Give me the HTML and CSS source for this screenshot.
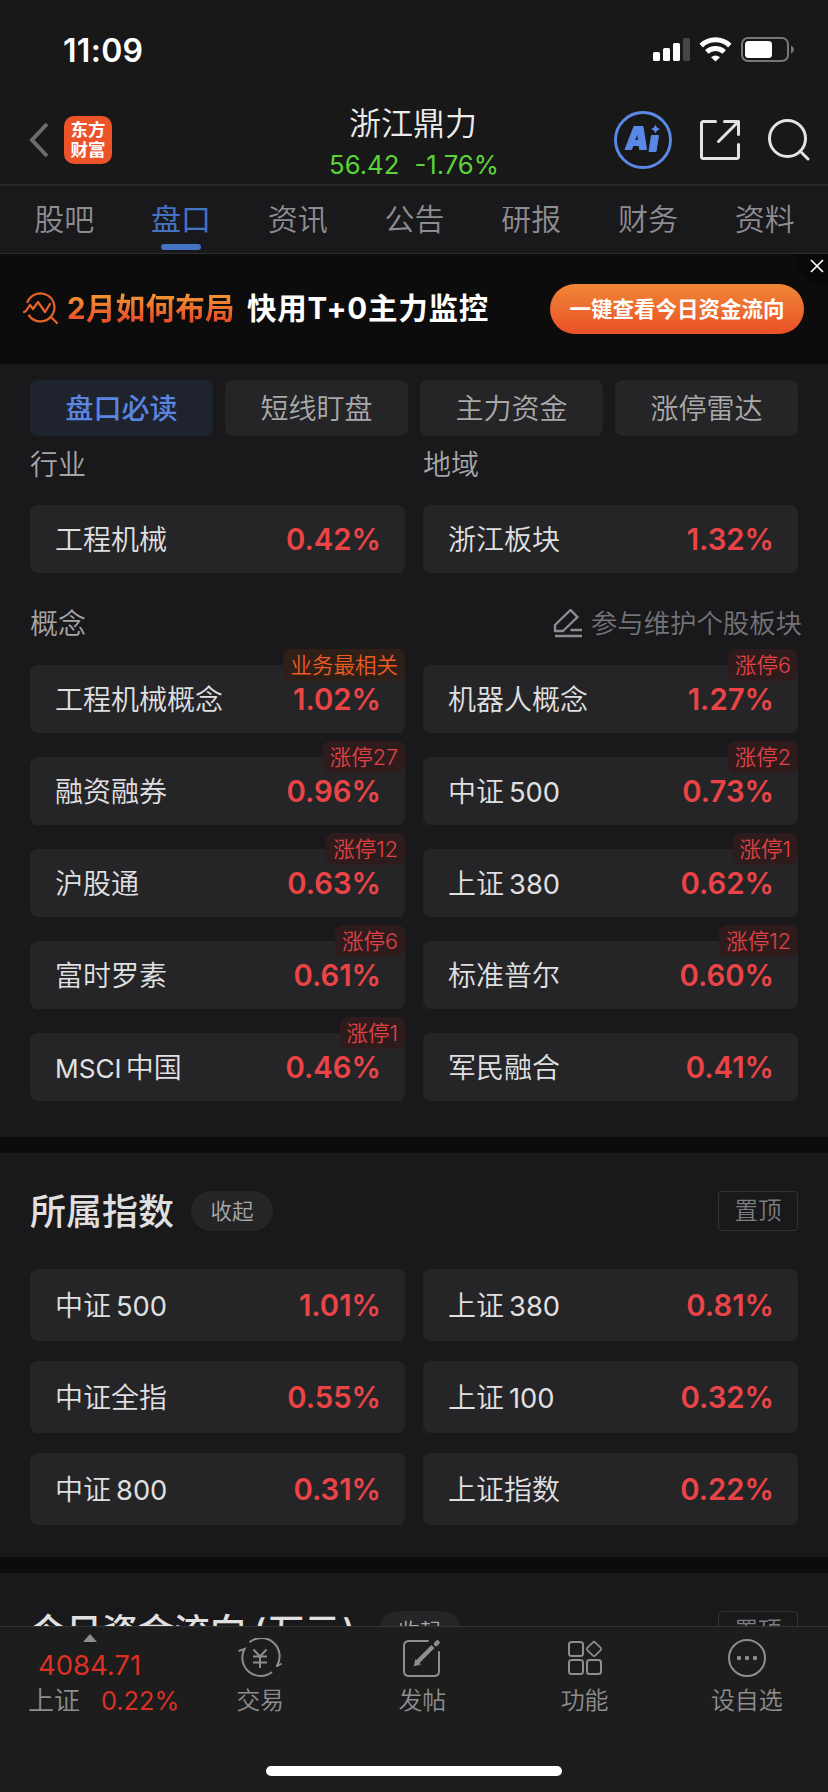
FILE: index.html
```html
<!DOCTYPE html>
<html lang="zh-CN">
<head>
<meta charset="utf-8">
<title>浙江鼎力 盘口</title>
<link rel="stylesheet" href="styles.css">
</head>
<body>
<div class="phone">
  <div class="status">
    <span class="clock">11:09</span>
    <svg class="status-icons" width="142" height="26" viewBox="0 0 142 26">
      <g fill="#fff"><rect x="0" y="15" width="7" height="9" rx="1.5"/><rect x="10" y="11" width="7" height="13" rx="1.5"/><rect x="20" y="6" width="7" height="18" rx="1.5"/></g>
      <rect x="30" y="1" width="7" height="23" rx="1.5" fill="#464646"/>
      <g fill="none" stroke="#fff" stroke-width="5"><path d="M48.2 8.6a20.5 20.5 0 0 1 28.6 0"/><path d="M53.8 15a12.6 12.6 0 0 1 17.4 0"/></g>
      <path d="M58 20.2q4.500-3.600 9 0L62.500 24.500z" fill="#fff"/>
      <rect x="89" y="1" width="46" height="23" rx="6" fill="none" stroke="#777" stroke-width="2"/>
      <rect x="92" y="4" width="27" height="17" rx="3.500" fill="#fff"/>
      <path d="M138 8.500q3 1.500 3 4t-3 4z" fill="#777"/>
    </svg>
  </div>

  <header class="header">
    <div class="head-left">
      <svg width="20" height="36" viewBox="0 0 20 36"><path d="M18 2 3 18l15 16" fill="none" stroke="#6c6c6c" stroke-width="4"/></svg>
      <div class="logo"><span>东方</span><span>财富</span></div>
    </div>
    <div class="quote">
      <div class="stock">浙江鼎力</div>
      <div class="price"><span>56.42</span><span>-1.76%</span></div>
    </div>
    <div class="head-right">
      <svg width="58" height="58" viewBox="0 0 58 58"><circle cx="29" cy="29" r="27.500" fill="none" stroke="#5a88e6" stroke-width="3"/>
        <path fill="#5a88e6" fill-rule="evenodd" stroke="#5a88e6" stroke-width="1" stroke-linejoin="round" d="M20 15.500h9l3.500 23h-7l-.5-4h-6l-1.500 4h-6.500zM23.500 22l-3 7.500h4zM37.500 24.500h7l-2.500 16h-7z"/>
        <path fill="#5a88e6" d="M41.500 13.500q1 3.500 4.500 4.500-3.500 1-4.500 4.500-1-3.500-4.500-4.500 3.500-1 4.500-4.500z"/></svg>
      <svg width="42" height="42" viewBox="0 0 42 42"><path d="M16.500 2.500H4.500q-2 0-2 2v33q0 2 2 2h33q2 0 2-2V25.500M25.500 2.500h14v13M39 3 19.500 22.500" fill="none" stroke="#e2e2e2" stroke-width="3" stroke-linecap="round" stroke-linejoin="round"/></svg>
      <svg width="42" height="42" viewBox="0 0 42 42"><circle cx="19.500" cy="19.500" r="18" fill="none" stroke="#e2e2e2" stroke-width="3"/><path d="m32 32 8 8" stroke="#e2e2e2" stroke-width="3" stroke-linecap="round"/></svg>
    </div>
  </header>

  <nav class="tabs">
    <span>股吧</span><span class="on">盘口</span><span>资讯</span><span>公告</span><span>研报</span><span>财务</span><span>资料</span>
  </nav>

  <div class="banner">
    <svg class="promo-icon" width="36" height="36" viewBox="0 0 36 36" fill="none" stroke="#e8622b" stroke-width="2.200" stroke-linecap="round" stroke-linejoin="round"><path d="M4.500 12A14 14 0 1 1 6 25.500M28 27l6 6"/><path d="m1 22 2-1 4-6 3 4 5-7 7 10 5-8"/></svg>
    <b class="promo-a">2月如何布局</b>
    <b class="promo-b">快用T+0主力监控</b>
    <span class="cta">一键查看今日资金流向</span>
    <div class="close"><svg width="14" height="14" viewBox="0 0 14 14"><path d="m1 1 12 12M13 1 1 13" stroke="#fff" stroke-width="1.700"/></svg></div>
  </div>

  <main class="content">
    <div class="pills"><span class="on">盘口必读</span><span>短线盯盘</span><span>主力资金</span><span>涨停雷达</span></div>

    <section class="boards">
      <div class="pair labels"><span>行业</span><span>地域</span></div>
      <div class="pair">
        <div class="card"><span>工程机械</span><b>0.42%</b></div>
        <div class="card"><span>浙江板块</span><b>1.32%</b></div>
      </div>
      <div class="concept">
        <span>概念</span>
        <span class="maintain"><svg width="30" height="30" viewBox="0 0 30 30" fill="none" stroke="#8e8e92" stroke-width="2.400" stroke-linejoin="round"><path d="M2 23v-6L17.500 2l7 7L10 23zM17.500 22H29M2 28h27"/></svg>参与维护个股板块</span>
      </div>
      <div class="pair">
        <div class="card"><span>工程机械概念</span><b>1.02%</b><i class="best">业务最相关</i></div>
        <div class="card"><span>机器人概念</span><b>1.27%</b><i>涨停6</i></div>
        <div class="card"><span>融资融券</span><b>0.96%</b><i>涨停27</i></div>
        <div class="card"><span>中证<em>500</em></span><b>0.73%</b><i>涨停2</i></div>
        <div class="card"><span>沪股通</span><b>0.63%</b><i>涨停12</i></div>
        <div class="card"><span>上证<em>380</em></span><b>0.62%</b><i>涨停1</i></div>
        <div class="card"><span>富时罗素</span><b>0.61%</b><i>涨停6</i></div>
        <div class="card"><span>标准普尔</span><b>0.60%</b><i>涨停12</i></div>
        <div class="card"><span><em class="lead">MSCI</em>中国</span><b>0.46%</b><i>涨停1</i></div>
        <div class="card"><span>军民融合</span><b>0.41%</b></div>
      </div>
    </section>

    <section class="block">
      <div class="block-head"><h2>所属指数</h2><span class="fold">收起</span><span class="pin">置顶</span></div>
      <div class="pair tall">
        <div class="card"><span>中证<em>500</em></span><b>1.01%</b></div>
        <div class="card"><span>上证<em>380</em></span><b>0.81%</b></div>
        <div class="card"><span>中证全指</span><b>0.55%</b></div>
        <div class="card"><span>上证<em>100</em></span><b>0.32%</b></div>
        <div class="card"><span>中证<em>800</em></span><b>0.31%</b></div>
        <div class="card"><span>上证指数</span><b>0.22%</b></div>
      </div>
    </section>

    <section class="block">
      <div class="block-head"><h2>今日资金流向<em class="open">(</em>万元<em class="shut">)</em></h2><span class="fold">收起</span><span class="pin">置顶</span></div>
    </section>
  </main>

  <footer class="bottom">
    <div class="bar">
      <div class="index">
        <svg width="14" height="8" viewBox="0 0 14 8"><path d="M7 0l7 8H0z" fill="#8d8d92"/></svg>
        <div class="point">4084.71</div>
        <div class="sub"><span>上证</span><span class="rate">0.22%</span></div>
      </div>
      <div class="act">
        <svg width="46" height="40" viewBox="0 0 46 40" fill="none" stroke="#8d8d92" stroke-width="2"><path d="M12.500 4.300A18.300 18.300 0 0 1 39.500 28.500l5-3M1.500 13l6-2A18.300 18.300 0 0 0 35 34"/><path d="m16.500 11.500 6.500 7 6.500-7M23 18.500V30M16 18.500h14M16 24.500h14"/></svg>
        <span>交易</span>
      </div>
      <div class="act">
        <svg width="40" height="40" viewBox="0 0 40 40" fill="none" stroke="#8d8d92" stroke-width="2"><path d="M26 3H7q-5 0-5 5v25q0 5 5 5h25q5 0 5-5V14" stroke-linecap="round"/><path d="M15 24.500 31 8.500" stroke-width="4.500"/><path d="m13 27 1-4 3 3z" fill="#8d8d92"/><path d="m34 6 1.500-1.500" stroke-width="4.500" stroke-linecap="round"/></svg>
        <span>发帖</span>
      </div>
      <div class="act">
        <svg width="40" height="40" viewBox="0 0 40 40" fill="none" stroke="#8d8d92" stroke-width="2"><rect x="4" y="4" width="14" height="14" rx="2.500"/><rect x="4" y="22" width="14" height="14" rx="2.500"/><rect x="22" y="22" width="14" height="14" rx="2.500"/><rect x="23.500" y="5.500" width="11" height="11" rx="1.500" transform="rotate(45 29 11)" stroke-width="1.700"/></svg>
        <span>功能</span>
      </div>
      <div class="act">
        <svg width="40" height="40" viewBox="0 0 40 40"><circle cx="20" cy="20" r="18" fill="none" stroke="#8d8d92" stroke-width="2"/><g fill="#8d8d92"><circle cx="12" cy="20" r="2.200"/><circle cx="20" cy="20" r="2.200"/><circle cx="28" cy="20" r="2.200"/></g></svg>
        <span>设自选</span>
      </div>
    </div>
    <div class="home"></div>
  </footer>
</div>
</body>
</html>
```

FILE: styles.css
```css
* { box-sizing: border-box; }
body { margin: 0; background: #19191b; }
.phone {
  width: 828px; height: 1792px; overflow: hidden;
  display: flex; flex-direction: column;
  background: #19191b; color: #e0e0e0;
  font-family: Inter, "Noto Sans CJK SC", sans-serif;
  font-weight: 350; white-space: nowrap;
}
em, i { font-style: normal; }
svg { display: block; flex: none; }

.status {
  height: 100px; flex: none; background: #181818;
  display: flex; justify-content: space-between; align-items: center;
  padding: 0 33px 0 63px;
}
.clock { font-size: 32px; font-weight: 600; color: #fff; letter-spacing: 0.3px; }

.header {
  height: 86px; flex: none; background: #181818; border-bottom: 2px solid #272727;
  display: grid; grid-template-columns: 300px 1fr 302px;
}
.head-left { display: flex; align-items: center; padding: 0 0 5px 29px; gap: 15px; }
.logo {
  width: 48px; height: 48px; border-radius: 10px; background: #ec5329; color: #fff;
  display: flex; flex-direction: column; align-items: center; justify-content: center;
  font-size: 17.500px; line-height: 20px; font-weight: 700;
}
.quote { text-align: center; padding-top: 3px; }
.stock { font-size: 32px; line-height: 42px; color: #ececec; }
.price { font-size: 25.700px; font-weight: 400; line-height: 40px; color: #5bd43a; display: flex; justify-content: center; gap: 15px; padding-left: 2px; }
.head-right { display: flex; align-items: center; justify-content: flex-end; padding: 0 18px 5px 0; gap: 27px; }

.tabs {
  height: 68px; flex: none; padding: 0 5px 0 6px; border-bottom: 1px solid #2b2b2c; color: #8d8d92;
  display: grid; grid-template-columns: repeat(7, 1fr); text-align: center;
  font-size: 30px; line-height: 67px;
}
.tabs .on { color: #4573c4; display: flex; flex-direction: column; align-items: center; font-weight: 400; }
.tabs .on::after { content: ""; width: 40px; height: 6px; border-radius: 3px; background: #4573c4; margin-top: -9px; }

.banner { position: relative; height: 110px; flex: none; background: #0c0c0c; display: flex; align-items: center; padding: 0 24px 0 23px; }
.promo-icon { margin-top: -2px; }
.promo-a, .promo-b { font-size: 29.500px; font-weight: 700; margin-top: -6px; }
.promo-a { margin-left: 8px; background: linear-gradient(#f29a33 20%, #e9522a 80%); -webkit-background-clip: text; color: transparent; letter-spacing: 0.300px; }
.promo-b { margin-left: 12px; color: #fff; letter-spacing: 0.800px; }
.cta {
  margin-left: auto; width: 254px; height: 50px; border-radius: 25px; text-align: center;
  background: linear-gradient(#f08636, #ea5128); color: #fff; font-size: 21.500px; line-height: 50px; font-weight: 700;
}
.close { position: absolute; right: 0; top: 0; width: 32px; height: 31px; background: #080808; border-bottom-left-radius: 30px; padding: 5px 0 0 14px; }

.content { flex: 1; min-height: 0; overflow: hidden; }
.pills { padding: 16px 30px 0; display: grid; grid-template-columns: repeat(4, 1fr); gap: 12px; }
.pills span { height: 56px; line-height: 58px; border-radius: 8px; background: #252527; color: #a9a9ab; font-size: 28px; text-align: center; }
.pills .on { background: #1e232e; color: #5a86e2; font-weight: 500; }

.boards { padding: 0 30px 36px; border-bottom: 16px solid #0c0c0c; }
.pair { display: grid; grid-template-columns: 1fr 1fr; gap: 24px 18px; }
.labels, .concept { font-size: 28px; color: #a6a6a8; }
.labels { height: 69px; line-height: 58px; }
.card {
  position: relative; height: 68px; border-radius: 8px; background: #252527;
  display: flex; justify-content: space-between; align-items: center; padding: 2px 24px 0 25px;
  font-size: 28px; line-height: 34px; color: #e0e0e2;
}
.card em { margin-left: 5px; font-size: 27.300px; font-weight: 400; }
.card .lead { margin: 0 4px 0 0; font-size: 26.200px; }
.card b { font-size: 29.300px; font-weight: 600; color: #ea4446; }
.card i {
  position: absolute; right: 0; top: -16px; height: 32px; line-height: 32px; padding: 0 7px;
  border-radius: 8px; background: #2e1c1d; color: #e24245; font-size: 21.500px;
}
.card .best { background: #2e2019; color: #ec5c20; }
.concept { height: 92px; display: flex; justify-content: space-between; padding: 3px 0 0; line-height: 96px; }
.maintain { display: flex; align-items: center; gap: 8px; color: #747478; font-size: 26.400px; margin: 1px -4px 0 0; height: 92px; }

.block { padding: 0 30px 32px; border-bottom: 16px solid #0c0c0c; }
.block-head { height: 116px; display: flex; align-items: center; }
h2 { margin: 0; padding-top: 2px; font-size: 36px; font-weight: 500; line-height: 44px; }
h2 .open { margin: 0 2px 0 7px; }
h2 .shut { margin: 0 6px 0 2px; }
.fold { width: 82px; height: 40px; line-height: 40px; border-radius: 20px; background: #252527; color: #a9a9ab; font-size: 21.500px; text-align: center; margin-left: 17px; }
.pin { width: 80px; height: 40px; line-height: 38px; border: 1px solid #333335; border-radius: 4px; color: #7d7d80; font-size: 23.500px; text-align: center; margin-left: auto; }
.tall { gap: 20px 18px; }
.tall .card { height: 72px; }

.bottom { height: 166px; flex: none; background: #1d1d1d; border-top: 1px solid #343434; color: #8d8d92; }
.bar { height: 139px; display: grid; grid-template-columns: 179px repeat(4, 1fr); }
.index { display: flex; flex-direction: column; align-items: center; padding-top: 7px; }
.point { font-size: 27.500px; line-height: 32px; color: #dc3022; margin: 7px 0 2px; font-weight: 400; }
.sub { display: flex; gap: 21px; font-size: 26px; line-height: 36px; padding-left: 28px; align-self: flex-start; }
.rate { color: #dc3022; font-size: 25.300px; font-weight: 400; }
.act { display: flex; flex-direction: column; align-items: center; padding-top: 11px; font-size: 24px; line-height: 46px; }
.home { width: 296px; height: 10px; border-radius: 5px; background: #fff; margin: 0 auto; }
```
